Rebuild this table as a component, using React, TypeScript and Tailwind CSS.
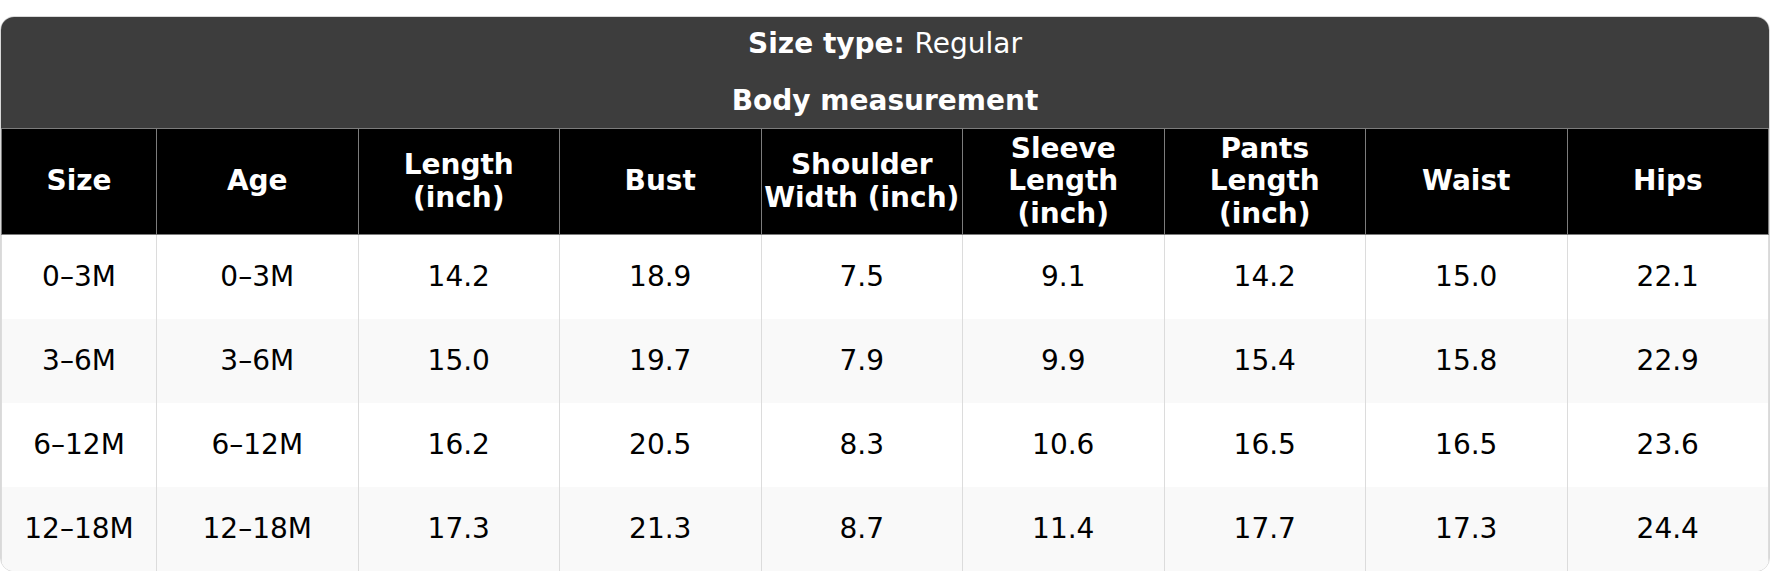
const headers = [
  ["Size"],
  ["Age"],
  ["Length", "(inch)"],
  ["Bust"],
  ["Shoulder", "Width (inch)"],
  ["Sleeve", "Length", "(inch)"],
  ["Pants", "Length", "(inch)"],
  ["Waist"],
  ["Hips"],
];

const rows = [
  ["0–3M", "0–3M", "14.2", "18.9", "7.5", "9.1", "14.2", "15.0", "22.1"],
  ["3–6M", "3–6M", "15.0", "19.7", "7.9", "9.9", "15.4", "15.8", "22.9"],
  ["6–12M", "6–12M", "16.2", "20.5", "8.3", "10.6", "16.5", "16.5", "23.6"],
  ["12–18M", "12–18M", "17.3", "21.3", "8.7", "11.4", "17.7", "17.3", "24.4"],
];

export default function App() {
  return (
    <div className="h-[571px] w-[1770px] bg-white pt-[16px] font-['DejaVu_Sans',sans-serif]">
      <div className="w-[1770px] overflow-hidden rounded-[14px] border border-[#d9d9d9]">
        <div className="flex flex-col items-center bg-[#3d3d3d] text-[28px] leading-none text-white">
          <div className="flex h-[53px] items-center whitespace-pre">
            <span className="font-bold">Size type: </span>
            <span>Regular</span>
          </div>
          <div className="flex h-[58px] items-center pt-[4px] font-bold">Body measurement</div>
        </div>
        <table className="w-full table-fixed border-collapse">
          <colgroup>
            <col className="w-[155px]" />
            {headers.slice(1).map((_, i) => (
              <col key={i} />
            ))}
          </colgroup>
          <thead>
            <tr className="h-[106px] bg-black text-white">
              {headers.map((h, i) => (
                <th
                  key={i}
                  className="border border-[#7c7c7c] px-0 text-[28px] font-bold leading-[32.2px]"
                >
                  {h.map((line, j) => (
                    <div key={j}>{line}</div>
                  ))}
                </th>
              ))}
            </tr>
          </thead>
          <tbody>
            {rows.map((r, i) => (
              <tr key={i} className={`h-[84px] ${i % 2 === 1 ? "bg-[#f9f9f9]" : "bg-white"}`}>
                {r.map((c, j) => (
                  <td
                    key={j}
                    className="border-x border-[#dcdcdc] text-center text-[28px] text-black"
                  >
                    {c}
                  </td>
                ))}
              </tr>
            ))}
          </tbody>
        </table>
      </div>
    </div>
  );
}
